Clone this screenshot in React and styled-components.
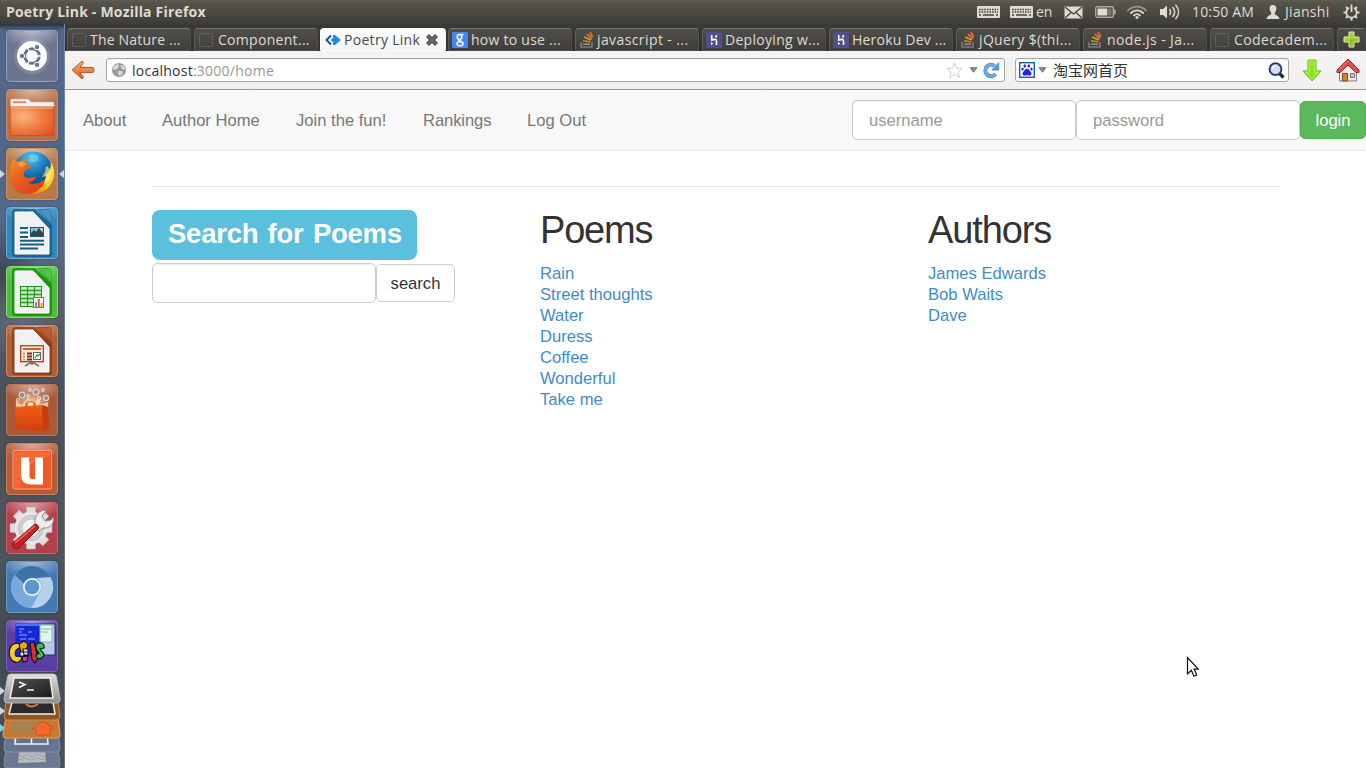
import React from "react";
import styled, { createGlobalStyle, css } from "styled-components";

const UI = `"Open Sans", "Noto Sans", "Noto Sans CJK SC", sans-serif`;

const GlobalStyle = createGlobalStyle`
  *, *::before, *::after { box-sizing: border-box; }
  body { margin: 0; overflow: hidden; background: #fff; }
  svg { display: block; flex: none; }
`;

const Desktop = styled.div`
  position: relative;
  width: 1366px;
  height: 768px;
  display: flex;
  flex-direction: column;
  font-family: ${UI};
`;

const Text = styled.span`
  white-space: pre;
  letter-spacing: ${(p) => p.$ls || 0}px;
`;

/* ---------- top panel ---------- */

const Panel = styled.header`
  height: 24px;
  flex: none;
  display: flex;
  align-items: center;
  justify-content: space-between;
  padding: 0 6px;
  background: linear-gradient(#5f5d50 0, #56544a 3px, #3d3c38 100%);
  color: #dfdbd2;
  font-size: 14px;
  line-height: 24px;
`;

const WindowTitle = styled(Text)`
  font-weight: 700;
  font-size: 14px;
`;

const Indicators = styled.div`
  display: flex;
  align-items: center;
  height: 24px;
`;

const Indicator = styled.div`
  display: flex;
  align-items: center;
  gap: ${(p) => p.$gap ?? 3}px;
  width: ${(p) => p.$w}px;
`;

const KeyboardIcon = () => (
  <svg width="23" height="12" viewBox="0 0 23 12">
    <rect width="23" height="12" rx="1" fill="#dfdbd2" />
    <path d="M2 3.500h19M2 6h19" stroke="#45433d" strokeWidth="1.600" strokeDasharray="1.600 1" />
    <path d="M2 9h2M6 9h11M19 9h2" stroke="#45433d" strokeWidth="1.500" />
  </svg>
);

const MailIcon = () => (
  <svg width="19" height="13" viewBox="0 0 19 13">
    <rect x="0.500" y="0.500" width="18" height="12" fill="#dfdbd2" />
    <path d="M1 1l8.500 7L18 1M1 12l6-5.500M18 12l-6-5.500" fill="none" stroke="#45433d" strokeWidth="1.300" />
  </svg>
);

const BatteryIcon = () => (
  <svg width="21" height="12" viewBox="0 0 21 12">
    <rect x="0.700" y="0.700" width="17.600" height="10.600" rx="1.500" fill="none" stroke="#aaa69b" strokeWidth="1.400" />
    <rect x="2.500" y="2.500" width="9.500" height="7" fill="#dfdbd2" />
    <rect x="12" y="2.500" width="4.500" height="7" fill="#77746c" />
    <rect x="19" y="3.500" width="1.600" height="5" fill="#aaa69b" />
  </svg>
);

const WifiIcon = () => (
  <svg width="20" height="14" viewBox="0 0 20 14" fill="none" strokeLinecap="round">
    <path d="M1 5.500C6 .3 14 .3 19 5.500" stroke="#9b978c" strokeWidth="1.800" />
    <path d="M4 8c3.500-3.500 8.500-3.500 12 0" stroke="#dfdbd2" strokeWidth="1.800" />
    <path d="M7 10.500c1.800-1.700 4.200-1.700 6 0" stroke="#dfdbd2" strokeWidth="1.800" />
    <circle cx="10" cy="12.500" r="1.500" fill="#dfdbd2" />
  </svg>
);

const SoundIcon = () => (
  <svg width="20" height="16" viewBox="0 0 20 16" fill="none">
    <path d="M0 5h3l4-3.500v13L3 11H0z" fill="#dfdbd2" />
    <path d="M9.500 5c1.500 2 1.500 4 0 6M12.500 3c2.800 3.200 2.800 6.800 0 10M15.500 .8c4 4.500 4 10 0 14.400" stroke="#dfdbd2" strokeWidth="1.500" />
  </svg>
);

const UserIcon = () => (
  <svg width="14" height="14" viewBox="0 0 14 14" fill="#dfdbd2">
    <path d="M7 0c2.500 0 3.600 1.800 3.300 4-.2 2-.9 3-1.500 3.700v1.500c1 1 4.200 1.300 4.700 4.800H.5c.5-3.500 3.700-3.800 4.700-4.800V7.700C4.600 7 3.900 6 3.700 4 3.400 1.800 4.500 0 7 0z" />
  </svg>
);

const GearPowerIcon = () => (
  <svg width="17" height="17" viewBox="0 0 17 17" fill="none" stroke="#dfdbd2">
    <circle cx="8.500" cy="8.500" r="5.200" strokeWidth="1.700" />
    <path d="M8.500 14v2.500M.5 8.500H3M14 8.500h2.500M3 3l1.500 1.500M14 3l-1.500 1.500M3 14l1.500-1.500M14 14l-1.500-1.500" strokeWidth="2" />
    <path d="M8.500 0v7.500" stroke="#494740" strokeWidth="4.600" />
    <path d="M8.500 .5v7.500" strokeWidth="1.900" />
  </svg>
);

/* ---------- launcher ---------- */

const Workspace = styled.div`
  flex: 1;
  min-height: 0;
  display: flex;
`;

const Launcher = styled.aside`
  width: 65px;
  flex: none;
  display: flex;
  flex-direction: column;
  align-items: center;
  gap: 7px;
  padding: 6px 1px 0 0;
  border-right: 1px solid #7187ad;
  border-image: linear-gradient(#6f87b1, #7583a1 35%, #68727c 60%, #707478) 1;
  background:
    linear-gradient(rgba(20, 25, 40, 0.7), transparent 6px),
    radial-gradient(circle at 15px 290px, rgba(130, 145, 165, 0.35), transparent 45px),
    radial-gradient(ellipse 40px 60px at 0 255px, rgba(32, 38, 45, 0.5), transparent),
    linear-gradient(#536789 0, #50668a 16%, #556987 28%, #59616d 37%, #4c535d 48%, #4b5055 58%, #4e565e 70%, #444b53 82%, #465160 100%);
`;

const Tile = styled.div`
  position: relative;
  width: 52px;
  height: 52px;
  flex: none;
  border-radius: 4px;
  border: 1px solid ${(p) => p.$edge};
  background: radial-gradient(ellipse 32px 16px at 50% 0, rgba(255, 255, 255, 0.5), transparent), ${(p) => p.$bg};
  box-shadow: 0 0 2px rgba(20, 20, 30, 0.35);
  & > svg { margin: -1px; }
`;

const Marker = styled.i`
  position: absolute;
  top: 21px;
  width: 0;
  height: 0;
  border: 4.5px solid transparent;
  ${(p) =>
    p.$right
      ? css`right: -7px; border-left: 0; border-right: 5px solid #d5d9e0;`
      : css`left: -7px; border-right: 0; border-left: 5px solid #d5d9e0;`}
`;

const DashIcon = () => (
  <svg width="52" height="52" viewBox="0 0 52 52">
    <circle cx="26" cy="26" r="18" fill="#fff" opacity=".12" />
    <circle cx="26" cy="26" r="15" fill="#fff" />
    <circle cx="26" cy="26" r="7.300" fill="none" stroke="#68718f" strokeWidth="3" />
    <g stroke="#fff" strokeWidth="1.400">
      <path d="M26 26h11M26 26l-5.500-10M26 26l-5.500 10" />
    </g>
    <circle cx="26" cy="26" r="5.600" fill="#fff" />
    <g fill="#68718f" stroke="#fff" strokeWidth="1">
      <circle cx="16" cy="26" r="2.700" /><circle cx="31" cy="17.200" r="2.700" /><circle cx="31" cy="34.800" r="2.700" />
    </g>
  </svg>
);

const FilesIcon = () => (
  <svg width="52" height="52" viewBox="0 0 52 52">
    <defs>
      <radialGradient id="folder" cx=".3" cy=".35" r=".9">
        <stop offset="0" stopColor="#f6b880" /><stop offset=".5" stopColor="#ee7c42" /><stop offset="1" stopColor="#e24e1b" />
      </radialGradient>
    </defs>
    <path d="M4.500 18v-6.500q0-1.500 1.500-1.500h16l3.500 3H47q1 0 1 1V18z" fill="#f3f1ef" stroke="#c9b4a8" strokeWidth=".6" />
    <path d="M7 12.200h13v2H7z" fill="#ee8558" />
    <path d="M4 18h44l-.5 28.500h-43z" fill="url(#folder)" stroke="#c9501f" strokeWidth=".8" />
    <path d="M5 19h42" stroke="#f9bd91" />
  </svg>
);

const FirefoxIcon = () => (
  <svg width="52" height="52" viewBox="0 0 52 52">
    <defs>
      <radialGradient id="globe" cx=".45" cy=".15" r=".8">
        <stop offset="0" stopColor="#4dc7ef" /><stop offset=".5" stopColor="#1b78bd" /><stop offset="1" stopColor="#0c3a77" />
      </radialGradient>
      <linearGradient id="fox" x1="0" y1="0" x2=".8" y2="1">
        <stop offset="0" stopColor="#f39a2b" /><stop offset=".4" stopColor="#ea6520" /><stop offset="1" stopColor="#dc3d17" />
      </linearGradient>
      <linearGradient id="tail" x1="1" y1="0" x2="0" y2="1">
        <stop offset="0" stopColor="#fff15a" /><stop offset=".5" stopColor="#fbc31f" /><stop offset="1" stopColor="#e85a1c" />
      </linearGradient>
    </defs>
    <circle cx="27" cy="22.500" r="19" fill="url(#globe)" />
    <path d="M24 7c5-2 8 0 9 4-3 4-8 4-10 2z" fill="#82d8f4" opacity=".55" />
    <path d="M45 14c4 7 4 15 0 22-6 10-18 12-26 8l10-5c8-1 12-5 11-13 3-1 5-5 5-12z" fill="url(#tail)" />
    <path d="M40 18c0 5-2 8-4 11l4-1c-1 4-3 6-6 8 6 0 10-3 11-9 1-4-2-8-5-9z" fill="#fff27c" opacity=".65" />
    <path d="M8 10c0 2 1 3 2 4 2-1 4-1 6-1 2-3 4-4 6-4-2 2-2 4-2 6 3 1 5 2 5 4-1 2-5 2-6 4-2 3-2 5 2 7 3 1 5-2 9-1-1 3-4 5-8 6 6 2 13 0 17-4-1 8-9 15-18 15C11 46 4 39 4 29c0-6 0-13 4-19z" fill="url(#fox)" />
    <path d="M12 15c3-2 6-1 8 1l-4 3c-3 0-4-2-4-4z" fill="#f7a53e" />
  </svg>
);

const DocBase = ({ dark, light, children }) => (
  <svg width="52" height="52" viewBox="0 0 52 52">
    <path d="M10 2h25l11 11v34q0 3-3 3H10q-4 0-4-4V6q0-4 4-4z" fill={dark} opacity=".85" />
    <path d="M29 2h14q3 0 3 3v13z" fill={light} />
    <path d="M31 2l15 17V6q0-4-4-4z" fill={dark} opacity=".55" />
    <path d="M33 3h12v12z" fill={light} opacity=".5" />
    <path d="M9 5h18l16 17v25H9z" fill="#f1f1f1" stroke="#fff" />
    {children}
  </svg>
);

const WriterIcon = () => (
  <DocBase dark="#145d8e" light="#5aa9d8">
    <path d="M14 21h8M14 25.500h8M14 30h8M14 33.700h24M14 37.500h24M14 41.500h18" stroke="#1b5c83" strokeWidth="2" />
    <rect x="24.500" y="20.500" width="13" height="9" fill="#7fc3e5" stroke="#175579" />
    <path d="M25 29v-3l3-3 2 2 3-4 4 5v3z" fill="#39443c" />
    <circle cx="35.500" cy="22.500" r="1.200" fill="#f7d451" />
  </DocBase>
);

const CalcIcon = () => (
  <DocBase dark="#168c10" light="#69d85c">
    <rect x="14.500" y="20.500" width="21" height="20" fill="#c7f2c0" stroke="#208a1b" />
    <path d="M14 24.500h22M14 28.500h22M14 32.500h22M14 36.500h22M21.500 20v21M28.500 20v21" stroke="#2c9c25" strokeWidth="1.300" />
    <rect x="27.500" y="31.500" width="10" height="10" fill="#fff" stroke="#777" />
    <path d="M30 41v-5" stroke="#5a9be0" strokeWidth="2.200" /><path d="M32.800 41v-8" stroke="#e3672b" strokeWidth="2.200" /><path d="M35.600 41v-4" stroke="#e8a72f" strokeWidth="2.200" />
  </DocBase>
);

const ImpressIcon = () => (
  <DocBase dark="#8f3a10" light="#c46a3b">
    <path d="M19 41l7-4 7 4M26 36v4" stroke="#777" strokeWidth="1.700" fill="none" />
    <rect x="14.700" y="20.700" width="22.600" height="16" fill="#fdeee5" stroke="#b24a1b" strokeWidth="1.400" />
    <path d="M17 24h18" stroke="#d9602c" strokeWidth="2" />
    <path d="M17 28.500h2M17 31.500h2M17 34.500h2" stroke="#e58b5f" strokeWidth="2" />
    <path d="M21 28.500h5M21 31.500h5M21 34.500h5" stroke="#7c2b0d" strokeWidth="2" />
    <rect x="27.500" y="27.500" width="7" height="7" fill="#fff" stroke="#666" />
    <path d="M29 33l2-3 1 1 2-2" fill="none" stroke="#2b9a3b" strokeWidth="1.200" />
  </DocBase>
);

const SoftwareIcon = () => (
  <svg width="52" height="52" viewBox="0 0 52 52">
    <defs>
      <radialGradient id="glow"><stop offset="0" stopColor="#fff6e0" /><stop offset="1" stopColor="#f5b98d" stopOpacity="0" /></radialGradient>
      <linearGradient id="bag" x1="0" y1="0" x2="0" y2="1"><stop offset="0" stopColor="#ef6118" /><stop offset="1" stopColor="#d33c0b" /></linearGradient>
    </defs>
    <ellipse cx="26" cy="19" rx="19" ry="11" fill="url(#glow)" />
    <g fill="none" stroke="#e9e4df" strokeWidth="1.200" opacity=".85">
      <circle cx="16" cy="11" r="2.800" fill="#82919c" /><circle cx="30" cy="8" r="3" fill="#b1948a" /><circle cx="40" cy="14" r="2.600" fill="#9f8c83" />
      <circle cx="24" cy="6" r="1.300" /><circle cx="37" cy="6" r="1.300" /><circle cx="12" cy="16" r="1.500" /><circle cx="22" cy="12" r="1.300" /><circle cx="33" cy="14" r="1.500" />
    </g>
    <path d="M10 17l6 4 6-7 4 6 9-6-2 7 9-3v5H10z" fill="#ffe3c4" opacity=".75" />
    <path d="M9 23l27-2 5 24-4 2-27-2z" fill="url(#bag)" />
    <path d="M36 21l6 2 1 20-6 4z" fill="#c53d0e" />
    <path d="M20.500 26v-7q0-1.500 1.500-1.500h5q1.500 0 1.500 1.500v7" fill="none" stroke="#e8590f" strokeWidth="2.200" />
    <path d="M20 19q0-2.200 2-2.200h5q2 0 2 2.200" fill="none" stroke="#ffdcb8" strokeWidth=".9" />
  </svg>
);

const UbuntuOneIcon = () => (
  <svg width="52" height="52" viewBox="0 0 52 52">
    <rect x="7" y="7.500" width="38.500" height="38.500" rx="1.500" fill="#f05a26" stroke="#ffa27a" />
    <path d="M8 9h36v4C25 17 18 27 13 45H8z" fill="#ff9566" opacity=".25" />
    <path d="M15 14.500h8.500l-1 3.500 1 1v14q0 3 3 3h2.500V14.500h8v27H25q-10 0-10-9z" fill="#fff" />
  </svg>
);

const SettingsIcon = () => (
  <svg width="52" height="52" viewBox="0 0 52 52">
    <g transform="translate(25 26)">
      <g fill="#dedede" stroke="#b7b7b7" strokeWidth=".6">
        {[0, 45, 90, 135].map((a) => (
          <rect key={a} x="-4.500" y="-21" width="9" height="42" rx="1" transform={`rotate(${a})`} />
        ))}
      </g>
      <circle r="16.500" fill="#e5e5e5" />
      <circle r="12.500" fill="#d0d0d0" stroke="#bcbcbc" />
      <circle r="9" fill="#f1f1f1" stroke="#c5c5c5" />
    </g>
    <path d="M29 22c-1-7 3-13 9-14l2 1-4 5 3 5 6-1 2-3c2 6-3 12-10 11l-4 3-4-3z" fill="#ececec" stroke="#8b8b8b" />
    <path d="M8 46q-3-2-1-5l22-19q3 0 4 4L13 46q-3 2-5 0z" fill="#c81f24" stroke="#82191b" />
    <path d="M9 41l20-17" stroke="#ee6967" strokeWidth="1.600" />
  </svg>
);

const ChromiumIcon = () => (
  <svg width="52" height="52" viewBox="0 0 52 52">
    <circle cx="26" cy="26" r="21" fill="#84b2dd" />
    <path d="M26 5a21 21 0 0 1 19 12H26a9 9 0 0 0-8 6L9 14A21 21 0 0 1 26 5z" fill="#3e72a8" />
    <path d="M44.500 16A21 21 0 0 1 25 47l9-16c3-5 1-11-3-14z" fill="#b4d1ec" />
    <path d="M9 14A21 21 0 0 0 25 47l7-12c-6 2-11 0-14-6z" fill="#78a9d9" />
    <circle cx="26" cy="26" r="9" fill="#eaf3fb" /><circle cx="26" cy="26" r="7.300" fill="#5d95cd" />
  </svg>
);

const WineIcon = () => (
  <svg width="52" height="52" viewBox="0 0 52 52">
    <rect x="10" y="4" width="39" height="31" fill="#b6c8ea" stroke="#222a6a" />
    <rect x="10" y="4" width="25" height="31" fill="#1728d8" />
    <path d="M10 5h25" stroke="#5270f0" strokeWidth="2" />
    <path d="M13 9h5M13 12h3M13 15h8M22 12h4M14 19h6M22 19h7M13 23h9" stroke="#8fa9ff" strokeWidth="1" />
    <rect x="34" y="5" width="12" height="17" fill="#e3f4ec" stroke="#8db6bb" />
    <path d="M35 9h10M35 12h7" stroke="#8fdc9f" strokeWidth="1.500" />
    <g stroke="#111" strokeWidth="1.100">
      <path d="M12 23c-10 0-11 13-5 18 4 3 9 0 9-4l-4-1c-4 2-4-6 1-8l2-3z" fill="#f3cc1f" />
      <path d="M13 24l5-3 4 3-2 7-5 2z" fill="#f5a21e" />
      <path d="M14 32h8v4h-8zM17 29h5v6h-4z" fill="#eee" />
      <path d="M16 37l6-1-1 5-4 1z" fill="#d832c8" />
      <path d="M24 23l4-1 4 16-3 5-3-4z" fill="#e22c30" />
      <path d="M30 25c4-5 9-1 8 3l-4 1 4 5c-1 6-8 6-8 1l3-2-3-4z" fill="#39bd50" />
    </g>
  </svg>
);

const FoldedStack = () => (
  <svg width="65" height="96" viewBox="0 0 65 96">
    <defs>
      <linearGradient id="term" x1="0" y1="0" x2="0" y2="1"><stop offset="0" stopColor="#dedede" /><stop offset="1" stopColor="#8d8d8d" /></linearGradient>
      <linearGradient id="screen" x1="0" y1="0" x2="1" y2="1"><stop offset="0" stopColor="#555" /><stop offset="1" stopColor="#191919" /></linearGradient>
    </defs>
    <path d="M6 76h52l2 17q0 3-3 3H7q-3 0-3-3z" fill="#6b7890" stroke="#8190a5" />
    <path d="M19 80l26-1 1 11-28 1z" fill="#c5c8ca" opacity=".85" />
    <path d="M19 83l4 2 4-3 5 3 5-3 8 3M19 88l6-2 6 2 6-2 8 2" stroke="#9a9fa3" fill="none" />
    <path d="M6 60h52l2 16q0 4-3 4H7q-3 0-3-4z" fill="#66748d" stroke="#8291a9" />
    <path d="M16 61l-1 11h33l-1-11M31.500 61v11" stroke="#f1f1f1" strokeWidth="1.500" fill="none" />
    <path d="M6 45h52l2 17q0 4-3 4H6q-3 0-3-4z" fill="#c67b33" stroke="#ec9a4a" strokeWidth="1.200" />
    <path d="M12 49l29-1-1 13H10z" fill="#a9814e" />
    <path d="M43 49l11 8h-4v6H36v-6h-4z" fill="#f16a2b" stroke="#df4d18" />
    <path d="M6 30h52l2 14q0 4-4 4H7q-3 0-3-4z" fill="#925420" stroke="#d38b47" />
    <path d="M12 30h41l2 12H9z" fill="#292a2b" stroke="#eee" strokeWidth="1.500" />
    <path d="M26 32q5 5 12 0" stroke="#e07a2c" strokeWidth="2" fill="none" />
    <path d="M11 2h42q3 0 3.500 3l3.500 22q.3 4-4 4H8q-4 0-4-4L7.500 5q.4-3 3.500-3z" fill="url(#term)" stroke="#c9c9c9" strokeWidth=".8" />
    <path d="M14 6h36l3 20H10z" fill="url(#screen)" stroke="#efefef" strokeWidth="1.500" />
    <path d="M19 10l6 2.500-6 3M27 18h7" stroke="#f4f4f4" strokeWidth="1.500" fill="none" />
    <path d="M0 15l5 4-5 4zM0 35l5 4-5 4z" fill="#d5d8da" /><path d="M0 52l5 4-5 4z" fill="#7fd0ee" />
  </svg>
);

const StackSlot = styled.div`
  width: 65px;
  margin: -7px -1px 0 0;
  align-self: flex-start;
`;

/* ---------- browser chrome ---------- */

const Browser = styled.main`
  flex: 1;
  min-width: 0;
  display: flex;
  flex-direction: column;
  background: #fff;
`;

const TabStrip = styled.div`
  height: 27px;
  flex: none;
  display: flex;
  align-items: flex-end;
  gap: 3px;
  padding-left: 2px;
  background: linear-gradient(#3b3a36, #31302d);
`;

const Tab = styled.div`
  width: 124px;
  height: 23px;
  flex: none;
  display: flex;
  align-items: center;
  gap: ${(p) => p.$gap ?? 3}px;
  padding-left: 3px;
  overflow: hidden;
  border-radius: 4px 4px 0 0;
  font-size: 14px;
  line-height: 22px;
  color: #dfdbd2;
  border: 1px solid #6b6a66;
  border-color: #777570 #4d4c48 transparent #5d5c58;
  background: linear-gradient(#4f4e4a, #3f3e3b);
  ${(p) =>
    p.$active &&
    css`
      width: 126px;
      margin: 0 -1px;
      padding-left: 4px;
      color: #4a4a4a;
      border-color: #fff #f4f3f2 transparent #fff;
      background: linear-gradient(#fdfdfd, #f4f3f2);
      & > svg:last-child { margin-left: 2px; }
    `}
`;

const NewTab = styled(Tab)`
  width: 29px;
  padding: 0;
  justify-content: center;
`;

const BlankFavicon = () => (
  <svg width="16" height="16" viewBox="0 0 16 16">
    <rect x="1.500" y="1.500" width="13" height="13" rx="2" fill="none" stroke="#6f6e69" strokeDasharray="2 1" />
  </svg>
);
const PoetryFavicon = () => (
  <svg width="16" height="16" viewBox="0 0 16 16">
    <path d="M6 3.500L1.500 8 6 12.500" fill="none" stroke="#135a9c" strokeWidth="2" />
    <path d="M8 3h2l6 5-6 5H8v-3L5.500 8 8 6z" fill="#1d8ce6" />
  </svg>
);
const GoogleFavicon = () => (
  <svg width="16" height="16" viewBox="0 0 16 16">
    <rect width="16" height="16" rx="1.500" fill="#4486f4" />
    <g fill="none" stroke="#fff" strokeWidth="1.500">
      <ellipse cx="7.500" cy="5" rx="2.300" ry="2.400" /><ellipse cx="8" cy="11.700" rx="3" ry="2" /><path d="M8.500 7.500L7 8.500l3 1.500M8 2.500h3.500" />
    </g>
  </svg>
);
const StackFavicon = () => (
  <svg width="16" height="16" viewBox="0 0 16 16" fill="none">
    <path d="M2 10v5h11v-5" stroke="#7d7c7a" strokeWidth="1.600" />
    <path d="M4 12.300h7" stroke="#99958f" strokeWidth="1.600" />
    <path d="M4 8.800l7.200 1" stroke="#b08544" strokeWidth="1.700" />
    <path d="M5.200 5l6.600 3" stroke="#e79b1c" strokeWidth="1.800" />
    <path d="M8 2l5 5M11 0l2.500 5" stroke="#ec6a2b" strokeWidth="1.800" />
  </svg>
);
const HerokuFavicon = () => (
  <svg width="16" height="16" viewBox="0 0 16 16">
    <rect width="16" height="16" fill="#50508a" />
    <path d="M5.700 3v5c2.500-1 4.800-1 4.800 1V13M10.500 3q0 1.500-1 2.500" fill="none" stroke="#fff" strokeWidth="1.600" />
    <path d="M5 10l2.200 1.600L5 13.200z" fill="#fff" />
  </svg>
);
const CloseIcon = () => (
  <svg width="14" height="14" viewBox="0 0 14 14">
    <path d="M2.500 2.500l9 9M11.500 2.500l-9 9" stroke="#4d4c4a" strokeWidth="4.200" />
    <path d="M3 3l8 8M11 3l-8 8" stroke="#6b6a68" strokeWidth="2" />
  </svg>
);
const PlusIcon = () => (
  <svg width="17" height="17" viewBox="0 0 17 17">
    <path d="M6 1h5v5h5v5h-5v5H6v-5H1V6h5z" fill="#a5cc3a" stroke="#e2efb0" />
    <path d="M6.500 8.500h8v2h-4v5h-4z" fill="#8db92d" opacity=".6" />
  </svg>
);

const Toolbar = styled.div`
  height: 39px;
  flex: none;
  display: flex;
  align-items: center;
  padding: 0 6px 0 6px;
  border-bottom: 1px solid #9b9a97;
  background: linear-gradient(#f5f4f2, #f0efed);
  color: #333;
`;

const Field = styled.div`
  display: flex;
  align-items: center;
  width: ${(p) => p.$w}px;
  height: 24px;
  padding: 0 ${(p) => p.$padX}px;
  border: 1px solid #a9a7a3;
  border-radius: 3px;
  background: #fff;
  font-size: 14px;
  line-height: 22px;
  box-shadow: inset 0 1px 1px rgba(0, 0, 0, 0.06);
`;

const UrlField = styled(Field)`
  margin: 0 10px 0 11px;
`;

const Spacer = styled.div`
  flex: 1;
`;

const Address = styled(Text)`
  margin-left: 5px;
  padding-top: 1px;
  color: #999793;
  b { color: #333; font-weight: 400; }
`;

const SearchTerm = styled(Text)`
  margin-left: 6px;
  font-family: "Noto Sans CJK SC", sans-serif;
  font-size: 15px;
`;

const ToolButtons = styled.div`
  display: flex;
  align-items: center;
  justify-content: space-between;
  width: 58px;
  margin-left: 13px;
`;

const BackIcon = () => (
  <svg width="24" height="20" viewBox="0 0 24 20">
    <defs><linearGradient id="back" x1="0" y1="0" x2="0" y2="1"><stop offset="0" stopColor="#f9b576" /><stop offset="1" stopColor="#e5561d" /></linearGradient></defs>
    <path d="M11 1.200L1.200 10 11 18.800q1.500-.5 1-2.200l-3.200-4H21q1.800 0 1.800-1.300V8.700q0-1.300-1.800-1.300H8.800l3.200-4q.5-1.700-1-2.200z" fill="url(#back)" stroke="#b5582a" strokeLinejoin="round" />
  </svg>
);
const GlobeIcon = () => (
  <svg width="16" height="16" viewBox="0 0 16 16">
    <circle cx="8" cy="8" r="7" fill="#999" />
    <path d="M3 4l4-2 1 2-2 3-3 1-1-1zM9 3l4 1 1 4-3-1zM7 9l4 0 1 2-3 3-2-2z" fill="#dadada" />
  </svg>
);
const StarIcon = () => (
  <svg width="17" height="17" viewBox="0 0 17 17">
    <path d="M8.500 1l2.100 5.200 5.700.3-4.300 3.700 1.400 5.300-4.900-3-4.900 3L5 10.200.7 6.500l5.700-.3z" fill="#fff" stroke="#cfcfcf" />
  </svg>
);
const CaretIcon = () => (
  <svg width="9" height="6" viewBox="0 0 9 6"><path d="M1 .700h7L4.500 5.300z" fill="#8a8a8a" stroke="#6a6a6a" strokeWidth=".8" /></svg>
);
const ReloadIcon = () => (
  <svg width="17" height="17" viewBox="0 0 17 17">
    <path d="M12.500 12A5.700 5.700 0 1 1 11.500 3.900" fill="none" stroke="#4a86c6" strokeWidth="4" />
    <path d="M15.700.7v7.300H8.800z" fill="#5c9bdb" stroke="#4a86c6" strokeWidth=".9" />
    <path d="M12.500 12A5.700 5.700 0 1 1 11.500 3.900" fill="none" stroke="#76abe1" strokeWidth="2.400" />
  </svg>
);
const PawIcon = () => (
  <svg width="16" height="16" viewBox="0 0 16 16">
    <rect x=".7" y=".7" width="14.600" height="14.600" fill="#fff" stroke="#14639f" strokeWidth="1.400" />
    <g fill="#2527d9">
      <ellipse cx="5.800" cy="4" rx="1.300" ry="1.700" /><ellipse cx="9.800" cy="4" rx="1.300" ry="1.700" /><ellipse cx="3.500" cy="7" rx="1.200" ry="1.500" /><ellipse cx="12.500" cy="7" rx="1.200" ry="1.500" />
      <path d="M8 6.800c2 0 2.500 2 4 3.500 1.300 1.600 0 3.700-2 3.300q-2-.5-4 0c-2 .4-3.300-1.700-2-3.300 1.500-1.500 2-3.500 4-3.500z" />
    </g>
  </svg>
);
const MagnifierIcon = () => (
  <svg width="17" height="17" viewBox="0 0 17 17">
    <path d="M11 11l4.500 4.500" stroke="#2b2b35" strokeWidth="3.400" />
    <circle cx="7.500" cy="7.200" r="5.900" fill="#cfdcf2" stroke="#2c3978" strokeWidth="2" />
    <path d="M4.500 6.500q.5-2.500 3-2.500" stroke="#fff" strokeWidth="1.400" fill="none" />
  </svg>
);
const DownloadIcon = () => (
  <svg width="20" height="23" viewBox="0 0 20 23">
    <path d="M6 1h8v11h5l-9 10-9-10h5z" fill="#8ce71f" stroke="#6cb829" strokeLinejoin="round" />
    <path d="M7.200 2.200h5.600v11h3.500L10 20.300 3.700 13.200h3.500z" stroke="#b2f35b" fill="none" />
  </svg>
);
const HomeIcon = () => (
  <svg width="24" height="24" viewBox="0 0 24 24">
    <path d="M3.500 12v11h17V12L12 4z" fill="#eeeae5" stroke="#858078" />
    <path d="M12 1L1 12v2.500h3L12 7l8 7.500h3V12z" fill="#d9504e" stroke="#a32225" strokeLinejoin="round" />
    <path d="M12 2.500L3 11.500" stroke="#ee8a86" />
    <path d="M6.500 15.500h5V23h-5z" fill="#d2872d" stroke="#7d4e1c" />
    <path d="M14.500 15.500h4v4h-4z" fill="#a9c4df" stroke="#77797c" />
  </svg>
);

/* ---------- web page ---------- */

const Page = styled.section`
  flex: 1;
  font-family: "Liberation Sans", Arial, sans-serif;
  font-size: 16.6px;
  color: #333;
`;

const Navbar = styled.nav`
  height: 61px;
  display: flex;
  align-items: center;
  justify-content: space-between;
  background: #f8f8f8;
  border-bottom: 1px solid #e7e7e7;
`;

const NavLinks = styled.div`
  display: flex;
  padding-top: 1px;
`;

const NavLink = styled.a`
  width: ${(p) => p.$w}px;
  padding-left: 18px;
  color: #777;
  line-height: 20px;
  white-space: pre;
  letter-spacing: ${(p) => p.$ls}px;
`;

const InlineForm = styled.form`
  display: flex;
  align-items: center;
`;

const Input = styled.input`
  width: 224px;
  height: 40px;
  padding: 1px 16px 0;
  border: 1px solid #ccc;
  border-radius: 5px;
  background: #fff;
  box-shadow: inset 0 1px 1px rgba(0, 0, 0, 0.075);
  font: inherit;
  letter-spacing: ${(p) => p.$ls || 0}px;
  &::placeholder { color: #999; opacity: 1; }
`;

const Button = styled.button`
  width: ${(p) => p.$w}px;
  height: 38px;
  padding: 1px 0 0;
  border: 1px solid ${(p) => (p.$green ? "#4cae4c" : "#ccc")};
  border-radius: 5px;
  background: ${(p) => (p.$green ? "#5cb85c" : "#fff")};
  color: ${(p) => (p.$green ? "#fff" : "#333")};
  font: inherit;
`;

const Container = styled.div`
  margin: 35px 86px 0 87px;
  padding-top: 23px;
  border-top: 1px solid #e6e6e6;
  display: grid;
  grid-template-columns: 388px 388px 1fr;
`;

const SearchBadge = styled.div`
  width: 265px;
  height: 50px;
  margin-bottom: 3px;
  padding-left: 16px;
  border-radius: 8px;
  background: #5bc0de;
  color: #fff;
  font-size: 27.5px;
  font-weight: 700;
  line-height: 47px;
  white-space: pre;
  letter-spacing: ${(p) => p.$ls}px;
  word-spacing: 2px;
`;

const Heading = styled.h1`
  margin: 0 0 9px;
  height: 44px;
  font-size: 38px;
  font-weight: 400;
  line-height: 41px;
  letter-spacing: ${(p) => p.$ls}px;
`;

const LinkList = styled.div`
  display: flex;
  flex-direction: column;
`;

const PageLink = styled.a`
  color: #428bca;
  line-height: 21px;
  letter-spacing: ${(p) => p.$ls || 0}px;
`;

const Pointer = styled.svg`
  position: absolute;
  left: 1186px;
  top: 656px;
`;

const apps = [
  { Icon: DashIcon, bg: "#6c7590", edge: "#98a1b5" },
  { Icon: FilesIcon, bg: "#b5704c", edge: "#cf8d6b" },
  { Icon: FirefoxIcon, bg: "#b97a4a", edge: "#d4945f", running: true },
  { Icon: WriterIcon, bg: "#3186bb", edge: "#68aed8" },
  { Icon: CalcIcon, bg: "#4ebd3b", edge: "#85dc76" },
  { Icon: ImpressIcon, bg: "#b25f38", edge: "#d08a66" },
  { Icon: SoftwareIcon, bg: "#a95a38", edge: "#c17b5c" },
  { Icon: UbuntuOneIcon, bg: "#b75c39", edge: "#cc805e" },
  { Icon: SettingsIcon, bg: "#b53e4b", edge: "#d06672" },
  { Icon: ChromiumIcon, bg: "#447ab2", edge: "#6b9bcc" },
  { Icon: WineIcon, bg: "#5a3da5", edge: "#7d62c0" },
];

const tabs = [
  { Icon: BlankFavicon, title: "The Nature ...", ls: 0.2 },
  { Icon: BlankFavicon, title: "Component...", ls: 0.3, gap: 4 },
  { Icon: PoetryFavicon, title: "Poetry Link", active: true, ls: 0.3 },
  { Icon: GoogleFavicon, title: "how to use ...", ls: 0.25 },
  { Icon: StackFavicon, title: "javascript - ...", gap: 2, ls: 0.4 },
  { Icon: HerokuFavicon, title: "Deploying w...", ls: 0.3 },
  { Icon: HerokuFavicon, title: "Heroku Dev ...", ls: 0.2 },
  { Icon: StackFavicon, title: "jQuery $(thi...", gap: 3, ls: 0.35 },
  { Icon: StackFavicon, title: "node.js - Ja...", gap: 4, ls: 0.4 },
  { Icon: BlankFavicon, title: "Codecadem...", gap: 4, ls: 0.4 },
];

const navItems = [
  ["About", 79, 0],
  ["Author Home", 134, 0],
  ["Join the fun!", 127, 0],
  ["Rankings", 104, -0.1],
  ["Log Out", 95, 0],
];

const poems = ["Rain", "Street thoughts", "Water", "Duress", "Coffee", "Wonderful", "Take me"];
const authors = ["James Edwards", "Bob Waits", "Dave"];

export default function App() {
  return (
    <Desktop>
      <GlobalStyle />
      <Panel>
        <WindowTitle $ls={0.2}>Poetry Link - Mozilla Firefox</WindowTitle>
        <Indicators>
          <Indicator $w={33}><KeyboardIcon /></Indicator>
          <Indicator $w={54}><KeyboardIcon /><Text>en</Text></Indicator>
          <Indicator $w={31}><MailIcon /></Indicator>
          <Indicator $w={32}><BatteryIcon /></Indicator>
          <Indicator $w={33}><WifiIcon /></Indicator>
          <Indicator $w={32}><SoundIcon /></Indicator>
          <Indicator $w={74}><Text $ls={0.15}>10:50 AM</Text></Indicator>
          <Indicator $w={77} $gap={5}><UserIcon /><Text $ls={0.3}>Jianshi</Text></Indicator>
          <GearPowerIcon />
        </Indicators>
      </Panel>
      <Workspace>
        <Launcher>
          {apps.map(({ Icon, bg, edge, running }, i) => (
            <Tile key={i} $bg={bg} $edge={edge}>
              <Icon />
              {running && <><Marker /><Marker $right /></>}
            </Tile>
          ))}
          <StackSlot><FoldedStack /></StackSlot>
        </Launcher>
        <Browser>
          <TabStrip>
            {tabs.map(({ Icon, title, active, ls, gap }) => (
              <Tab key={title} $active={active} $gap={gap}>
                <Icon />
                <Text $ls={ls}>{title}</Text>
                {active && <CloseIcon />}
              </Tab>
            ))}
            <NewTab><PlusIcon /></NewTab>
          </TabStrip>
          <Toolbar>
            <BackIcon />
            <UrlField $w={899} $padX={4}>
              <GlobeIcon />
              <Address $ls={0.25}><b>localhost</b>:3000/home</Address>
              <Spacer />
              <StarIcon />
              <Indicator $w={20}><Spacer /><CaretIcon /><Spacer /></Indicator>
              <ReloadIcon />
            </UrlField>
            <Field $w={274} $padX={3}>
              <PawIcon />
              <Indicator $w={12} $gap={0}><Spacer /><CaretIcon /></Indicator>
              <SearchTerm>淘宝网首页</SearchTerm>
              <Spacer />
              <MagnifierIcon />
            </Field>
            <ToolButtons><DownloadIcon /><HomeIcon /></ToolButtons>
          </Toolbar>
          <Page>
            <Navbar>
              <NavLinks>
                {navItems.map(([label, w, ls]) => (
                  <NavLink key={label} $w={w} $ls={ls}>{label}</NavLink>
                ))}
              </NavLinks>
              <InlineForm>
                <Input placeholder="username" />
                <Input placeholder="password" />
                <Button type="button" $green $w={66}>login</Button>
              </InlineForm>
            </Navbar>
            <Container>
              <div>
                <SearchBadge $ls={-0.25}>Search for Poems</SearchBadge>
                <InlineForm>
                  <Input />
                  <Button type="button" $w={79}>search</Button>
                </InlineForm>
              </div>
              <div>
                <Heading $ls={-1.2}>Poems</Heading>
                <LinkList>
                  {poems.map((p) => <PageLink key={p}>{p}</PageLink>)}
                </LinkList>
              </div>
              <div>
                <Heading $ls={-1.1}>Authors</Heading>
                <LinkList>
                  {authors.map((a) => <PageLink key={a}>{a}</PageLink>)}
                </LinkList>
              </div>
            </Container>
          </Page>
        </Browser>
      </Workspace>
      <Pointer width="14" height="22" viewBox="0 0 14 22">
        <path d="M1.500 1.500v16.300l3.900-3.600 2.500 6 2.800-1.200-2.500-5.800h4z" fill="#fff" stroke="#111" strokeWidth="1.200" />
      </Pointer>
    </Desktop>
  );
}
